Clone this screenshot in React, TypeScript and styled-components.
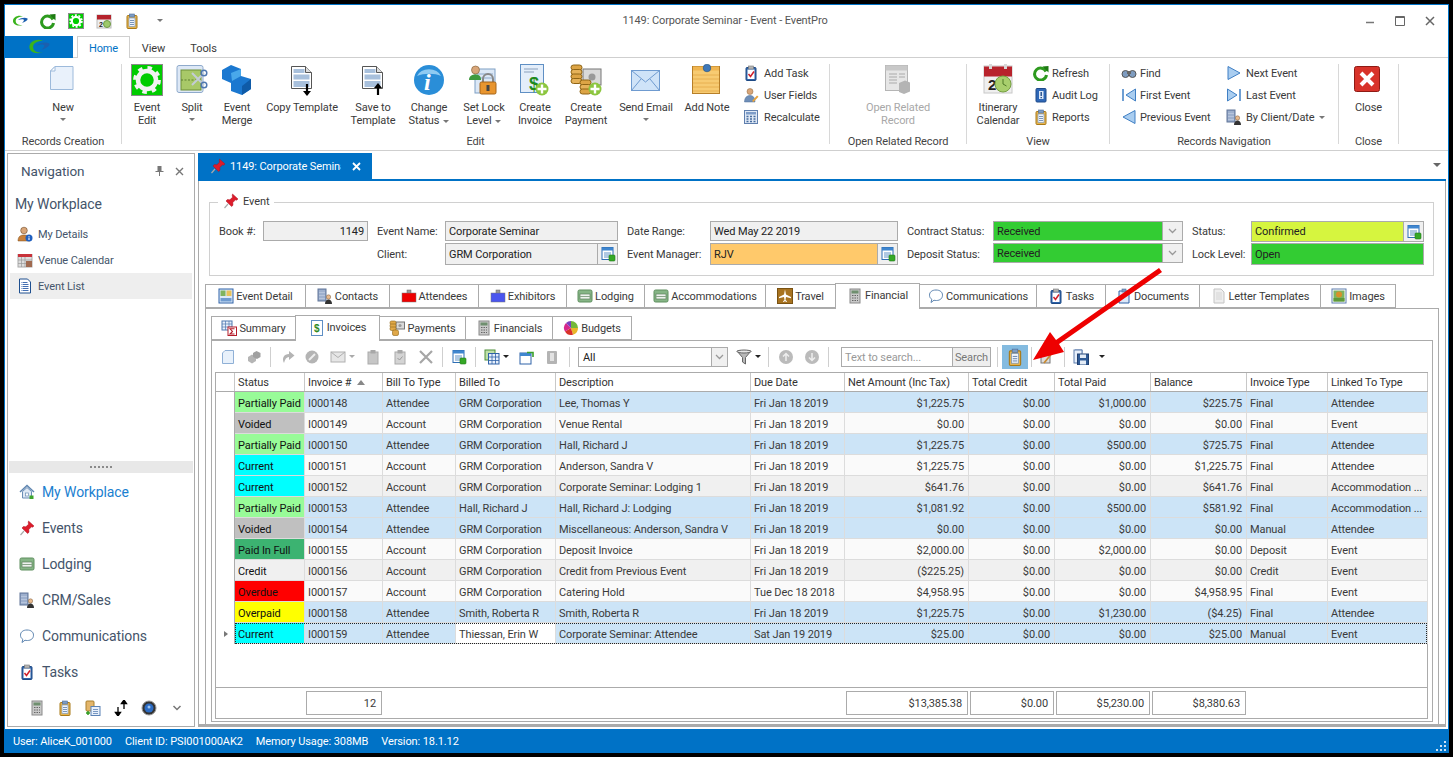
import React from 'react';
import styled, { createGlobalStyle } from 'styled-components';

const BLUE = '#0072c6';
const LINE = '#ababab';
const TEXT = '#3a3a3a';
const COLS = '19px 70px 78px 73px 100px 195px 94px 124px 86px 96px 96px 81px 100px';

const GlobalStyle = createGlobalStyle`
  html, body { margin: 0; padding: 0; background: #000; overflow: hidden; }
  body { font-family: Roboto, "Noto Sans", sans-serif; font-size: 11px; letter-spacing: -0.1px; color: ${TEXT}; }
  * { box-sizing: border-box; }
`;

const Icon: React.FC<{ name: string; size?: number }> = ({ name, size = 16 }) => {
  const big = name.startsWith('b_');
  return (
    <IconSvg viewBox={big ? '0 0 32 32' : '0 0 16 16'} $size={size}>
      {shapes[name]}
    </IconSvg>
  );
};

const IconSvg = styled.svg<{ $size: number }>`
  width: ${p => p.$size}px;
  height: ${p => p.$size}px;
  flex: none;
  display: block;
`;

const calcBody = (
  <>
    <rect x="3" y="1" width="10" height="14" fill="#c9c9c9" stroke="#8a8a8a" />
    <rect x="4.5" y="2.5" width="7" height="3" fill="#6f8f6f" />
    <path d="M5 7.5h1.5M7.5 7.5H9M10 7.5h1M5 10h1.5M7.5 10H9M10 10h1M5 12.5h1.5M7.5 12.5H9M10 12.5h1" stroke="#666" />
  </>
);
const clipboard = (
  <>
    <rect x="3" y="2.5" width="10" height="13" rx="1" fill="#e6b450" stroke="#a97a18" />
    <rect x="5" y="5" width="6" height="8.5" fill="#eef3fb" stroke="#6f8fb8" strokeWidth=".6" />
    <rect x="5.5" y="1" width="5" height="3" fill="#7d9cc4" stroke="#4f6f9b" strokeWidth=".6" />
    <path d="M6 7.5h4M6 9.5h4M6 11.5h4" stroke="#5b7ca8" strokeWidth=".8" />
  </>
);
const taskBoard = (
  <>
    <rect x="3" y="2.5" width="10" height="13" rx="1" fill="#2e62a8" stroke="#1e4a85" />
    <rect x="4.5" y="4.5" width="7" height="9.5" fill="#fff" />
    <rect x="5.5" y="1" width="5" height="3" fill="#b5b5b5" stroke="#777" strokeWidth=".6" />
    <path d="M5.5 9l2 2.5 3.5-5" stroke="#d0202a" strokeWidth="1.5" fill="none" />
  </>
);
const bed = (
  <>
    <rect x="1" y="2" width="14" height="12" rx="1.5" fill="#86b586" stroke="#5f8f5f" />
    <rect x="3" y="6" width="10" height="5" fill="#eef3ee" stroke="#5f7f5f" strokeWidth=".7" />
    <path d="M3 8.5h10" stroke="#8aa58a" />
  </>
);
const building = (
  <>
    <rect x="1" y="1" width="8" height="12" fill="#8ea3c4" stroke="#62779a" />
    <path d="M3 2v10M5 2v10M7 2v10M2 4.5h6M2 7.5h6M2 10.5h6" stroke="#c6d2e6" strokeWidth=".6" />
    <circle cx="11.5" cy="9" r="2.2" fill="#e8b98c" stroke="#7a5a3a" strokeWidth=".5" />
    <path d="M8 16c0-3 1.5-4.500 3.500-4.500S15 13 15 16z" fill="#333" />
  </>
);
const bubble = (
  <path d="M8 2c4 0 6.500 2 6.500 5.200S12 12.500 8.500 12.500c-1 0-1.800 0-2.500-.3L3 14.500l.8-3.200C2.300 10.300 1.500 9 1.500 7.200 1.500 4 4 2 8 2z" fill="#fff" stroke="#5e85b0" />
);
const pin = (
  <>
    <path d="M5 11L1.500 15" stroke="#aaa" strokeWidth="1.2" />
    <path d="M9.500 1l5.500 5-1.500 1.200-1-.4-2.700 2.800.2 2.600-1.400 1.300L3 8l1.300-1.400 2.600.2 2.800-2.700-.5-1.200z" fill="#dd1c2b" stroke="#a81020" strokeWidth=".5" />
  </>
);
const appCard = (
  <>
    <rect x="2" y="1.5" width="11" height="12" fill="#fff" stroke="#2f6fb5" />
    <rect x="2" y="1.500" width="11" height="3" fill="#3f86cf" />
    <path d="M4 7h7M4 9h7M4 11h5" stroke="#4f86c0" strokeWidth=".9" />
    <rect x="9" y="9" width="6" height="6" rx="1" fill="#35a826" stroke="#207a18" strokeWidth=".6" />
  </>
);
const badge = (c: string) => (
  <>
    <rect x="6" y="2" width="4" height="4" fill="#999" stroke="#666" strokeWidth=".5" />
    <rect x="1" y="5" width="14" height="9" fill={c} stroke="#777" strokeWidth=".5" />
  </>
);
const templateDoc = (up: boolean) => (
  <>
    <path d="M5.500 2.500h14l6 6v16h-20z" fill="#fff" stroke="#555" />
    <path d="M19.500 2.500v6h6" fill="#ddd" stroke="#555" />
    <rect x="7.500" y="5" width="11" height="4" fill="#a8c0dc" />
    <rect x="7.500" y="10.500" width="16" height="5" fill="#a8c0dc" />
    <rect x="7.500" y="17" width="16" height="6" fill="#a8c0dc" />
    <path d={up ? 'M21 31V21' : 'M21 20v10'} stroke="#000" strokeWidth="2.200" />
    <path d={up ? 'M17 24l4-5 4 5z' : 'M17 27l4 5 4-5z'} fill="#000" />
  </>
);
const triangle = (d: string, bar?: string) => (
  <>
    <path d={d} fill="#a9cdf0" stroke="#3f7fc4" />
    {bar && <path d={bar} stroke="#3f7fc4" strokeWidth="1.500" />}
  </>
);
const grayClip = (
  <>
    <rect x="3" y="3" width="10" height="12" fill="#c6c6c6" stroke="#ababab" />
    <rect x="5.500" y="1" width="5" height="3.500" fill="#a8a8a8" />
  </>
);

const shapes: Record<string, React.ReactNode> = {
  logo: (
    <>
      <path d="M11 3.500C6.500 1.500 1 4 1 8c0 3.500 4.500 5.500 9.500 4-3.500.5-6.800-1-6.800-4C3.700 5.200 7 3.500 11 3.500z" fill="#3ab31c" />
      <path d="M6 7c2.500-2 7-3 9.500-1.500.8 1-1.500 3-5.500 4.500 1.500-1.500 2.500-3 1.500-3.500-1.500-.6-3.500 0-5.500.5z" fill="#1b5fae" />
    </>
  ),
  refresh: (
    <>
      <path d="M13 6.500A6 6 0 1 0 13.500 10" fill="none" stroke="#2d9a1e" strokeWidth="3" />
      <path d="M9.500 1.500L15.500 1v6.500z" fill="#1d7a12" />
    </>
  ),
  gearSmall: (
    <>
      <rect x="0.500" y="0.500" width="15" height="15" fill="#00cc00" stroke="#8a8a8a" />
      <circle cx="8" cy="8" r="4.200" fill="none" stroke="#fff" strokeWidth="2.200" />
      <circle cx="8" cy="8" r="5.900" fill="none" stroke="#fff" strokeWidth="1.600" strokeDasharray="2 1.700" />
    </>
  ),
  calendar: (
    <>
      <rect x="1" y="2" width="14" height="13" fill="#eee" stroke="#bbb" />
      <rect x="1" y="2" width="14" height="4.500" fill="#b5232c" />
      <text x="3" y="13.500" fontSize="7" fontWeight="700" fill="#222" fontFamily="Liberation Sans">2</text>
      <circle cx="11" cy="11" r="3.500" fill="#9cc96a" stroke="#6f9a45" />
    </>
  ),
  clipboard,
  task: taskBoard,
  userFields: (
    <>
      <circle cx="7" cy="4.500" r="3" fill="#d9a679" stroke="#8a6238" strokeWidth=".5" />
      <path d="M1.500 15c0-4.500 2.500-6.500 5.500-6.500s5 2 5 6.500z" fill="#6f8fb8" stroke="#4f6f98" strokeWidth=".5" />
      <path d="M9 14l5-5.500 1.500 1.200L10.500 15z" fill="#e8a33a" />
    </>
  ),
  recalc: (
    <>
      <rect x="1.500" y="1.500" width="13" height="13" fill="#dfe8f5" stroke="#5f7fae" />
      <rect x="3" y="3" width="10" height="2.500" fill="#7d9cc8" />
      <path d="M3.500 7.500h2M7 7.500h2M10.500 7.500h2M3.500 10h2M7 10h2M10.500 10h2M3.500 12.500h2M7 12.500h2M10.500 12.500h2" stroke="#456b9e" strokeWidth="1.300" />
    </>
  ),
  audit: (
    <>
      <rect x="3" y="1.500" width="10" height="13.500" rx="1" fill="#2f68b8" stroke="#1f4a8a" />
      <rect x="6" y="4" width="4.500" height="8" fill="#dbe8f8" />
      <path d="M8.200 5v4M8.200 10v1.200" stroke="#1f4a8a" strokeWidth="1.400" />
    </>
  ),
  find: (
    <>
      <circle cx="4.500" cy="9" r="3.500" fill="#7e9cc0" stroke="#555" />
      <circle cx="11.500" cy="9" r="3.500" fill="#7e9cc0" stroke="#555" />
      <rect x="6" y="6" width="4" height="3" fill="#666" />
    </>
  ),
  first: triangle('M14.500 2v12L5 8z', 'M2 2v12'),
  prev: triangle('M14 1.500v13L2 8z'),
  next: triangle('M2 1.500v13L14 8z'),
  last: triangle('M1.500 2v12L11 8z', 'M14 2v12'),
  building,
  bubble,
  pin,
  appCard,
  bed,
  userInfo: (
    <>
      <circle cx="7" cy="4.500" r="3.300" fill="#d9a679" stroke="#6f4a28" strokeWidth=".6" />
      <path d="M1 15c0-4.500 2.500-6 6-6s6 1.500 6 6z" fill="#c9803a" stroke="#7d5020" strokeWidth=".5" />
      <circle cx="12" cy="12" r="3.500" fill="#1f5fbf" />
      <path d="M12 10v.8M12 11.500v2.500" stroke="#fff" strokeWidth="1.100" />
    </>
  ),
  venue: (
    <>
      <rect x="1" y="2.500" width="14" height="12.500" fill="#ddd" stroke="#aaa" />
      <rect x="1" y="2" width="14" height="3" fill="#c8323a" />
      <path d="M4.500 5v10M8 5v10M1 8h14M1 11.500h14" stroke="#999" strokeWidth=".7" />
      <rect x="9" y="9" width="6" height="6" fill="#a06a50" />
    </>
  ),
  list: (
    <>
      <path d="M2.500 1h8l3 3v11h-11z" fill="#fff" stroke="#1e4f8f" />
      <path d="M4.500 4.500h6M4.500 6.500h7M4.500 8.500h7M4.500 10.500h7M4.500 12.500h7" stroke="#2f5fa8" strokeWidth=".9" strokeDasharray="1 .5 6" />
    </>
  ),
  home: (
    <>
      <path d="M1 8l7-6.500L15 8" fill="none" stroke="#5e85b0" strokeWidth="1.500" />
      <path d="M3.500 7.500V14h9V7.500L8 3.500z" fill="#dfe9f5" stroke="#6a8db5" />
      <rect x="6.500" y="9" width="3" height="3" fill="#fff" stroke="#6a8db5" strokeWidth=".7" />
      <rect x="10.500" y="11.500" width="4" height="3.500" fill="#3fa62e" />
    </>
  ),
  calcSmall: calcBody,
  copyAdd: (
    <>
      <rect x="1" y="1" width="8" height="10" rx="1" fill="#e3b56a" stroke="#a9802f" />
      <path d="M1 13h4M3 11v4" stroke="#2f9a1f" strokeWidth="1.500" />
      <rect x="6" y="6.500" width="9" height="9" fill="#e8f0fb" stroke="#5b82b5" />
      <path d="M8 9.500h5M8 11.500h5M8 13.500h5" stroke="#5b82b5" strokeWidth=".8" />
    </>
  ),
  sortArrows: (
    <>
      <path d="M5 7v8M2.500 12.500L5 16l2.500-3.500z" stroke="#000" strokeWidth="1.300" />
      <path d="M11 9V1M8.500 3.500L11 0l2.500 3.500z" stroke="#000" strokeWidth="1.300" />
    </>
  ),
  orb: (
    <>
      <circle cx="8" cy="8" r="7" fill="#333" stroke="#999" />
      <circle cx="8" cy="8" r="4.500" fill="#2c6cc4" />
      <circle cx="8" cy="7" r="1.500" fill="#9cc4f0" />
    </>
  ),
  eventDetail: (
    <>
      <rect x="1" y="1" width="14" height="14" fill="#dbe8f8" stroke="#2f62a8" />
      <rect x="2.500" y="2.500" width="5" height="5.500" fill="#7fb35e" />
      <rect x="8.500" y="2.500" width="5" height="5.500" fill="#e8c25a" />
      <rect x="2.500" y="10" width="11" height="3.500" fill="#6f9bd0" />
    </>
  ),
  badgeRed: badge('#ee0000'),
  badgeBlue: badge('#4a55ee'),
  plane: (
    <>
      <rect x="0.500" y="0.500" width="15" height="15" fill="#a87320" stroke="#7a5212" />
      <path d="M8 1.500l1 5 5 2.500v1.200l-5-1.200-.5 3 1.500 1.200V14L8 13.300 6 14v-.8l1.500-1.200-.5-3L2 10.200V9l5-2.500z" fill="#fff" />
    </>
  ),
  documents: (
    <>
      <path d="M3 3h10v12H3z" fill="#dce8f8" stroke="#2f62a8" />
      <rect x="6" y="1" width="4" height="3" fill="#7d9cc4" stroke="#4f6f9b" strokeWidth=".6" />
    </>
  ),
  letter: (
    <>
      <path d="M3 1h7l3 3v11H3z" fill="#eee" stroke="#c4c4c4" />
      <path d="M5 5h6M5 7h6M5 9h6M5 11h6" stroke="#d6d6d6" />
    </>
  ),
  image: (
    <>
      <rect x="1" y="1" width="14" height="14" fill="#fff" stroke="#5f7fae" />
      <rect x="2.500" y="2.500" width="11" height="11" fill="#7fb35e" />
      <circle cx="8" cy="6.500" r="3" fill="#d8902a" />
      <rect x="2.500" y="10" width="11" height="3.500" fill="#5e9a3a" />
    </>
  ),
  summary: (
    <>
      <rect x="1" y="1" width="10" height="9" fill="#e8f0fb" stroke="#4f78b0" />
      <path d="M1 4h10M4.500 1v9M8 1v9M1 7h10" stroke="#4f78b0" strokeWidth=".7" />
      <rect x="7" y="7" width="8.500" height="8.500" fill="#fff" stroke="#b51c2a" />
      <path d="M13.500 8.800h-4.500l2.500 2.700-2.500 2.500h4.500" fill="none" stroke="#b51c2a" strokeWidth="1.100" />
    </>
  ),
  invoice: (
    <>
      <rect x="2.500" y="0.500" width="11" height="15" fill="#fff" stroke="#5f8fc4" />
      <text x="5" y="12" fontSize="10" fontWeight="700" fill="#2f8a1f" fontFamily="Liberation Sans">$</text>
    </>
  ),
  payment: (
    <>
      <rect x="7" y="2" width="8.500" height="7" fill="#d9d9d9" stroke="#777" />
      <circle cx="11" cy="5.500" r="1.600" fill="#999" />
      <rect x="1" y="1" width="6" height="3.500" rx="1.500" fill="#e0a848" stroke="#8f6414" strokeWidth=".6" />
      <rect x="1" y="4" width="6" height="3.500" rx="1.500" fill="#e0a848" stroke="#8f6414" strokeWidth=".6" />
      <rect x="1" y="7" width="6" height="3.500" rx="1.500" fill="#e0a848" stroke="#8f6414" strokeWidth=".6" />
      <rect x="3.500" y="10" width="6" height="5.500" rx="1.500" fill="#e0a848" stroke="#8f6414" strokeWidth=".6" />
    </>
  ),
  pie: (
    <>
      <path d="M8 8V1a7 7 0 0 1 7 7z" fill="#74b83a" />
      <path d="M8 8h7a7 7 0 0 1-5 6.700z" fill="#e8b62a" />
      <path d="M8 8l2 6.700A7 7 0 0 1 2 11.500z" fill="#d8322a" />
      <path d="M8 8L2 11.500A7 7 0 0 1 3 3z" fill="#d6288c" />
      <path d="M8 8L3 3a7 7 0 0 1 5-2z" fill="#7a3fc0" />
    </>
  ),
  pageLight: <path d="M5 1.500h8.500v13h-11V4z" fill="#e8f1fb" stroke="#8fb0d6" />,
  grayCopy: (
    <>
      <path d="M2 8l4-2.500 4 2.500v4l-4 2.500-4-2.500z" fill="#b5b5b5" />
      <path d="M7 4l3.500-2 4 2v4l-3.500 2-4-2z" fill="#a0a0a0" />
    </>
  ),
  grayRedo: <path d="M4 14c-2.500-5 0-9 5-9V2l5.500 4.500L9 11V8C6.500 8 5 10 4 14z" fill="#b4b4b4" />,
  grayCancel: (
    <>
      <circle cx="8" cy="8" r="6.500" fill="#b4b4b4" />
      <path d="M5 11l6-6" stroke="#eee" strokeWidth="2" />
    </>
  ),
  grayMail: (
    <>
      <rect x="1" y="3" width="14" height="10" fill="#e6e6e6" stroke="#b0b0b0" />
      <path d="M1 3l7 5.500L15 3" fill="none" stroke="#b0b0b0" />
    </>
  ),
  grayClip,
  grayClipCheck: (
    <>
      <rect x="3" y="3" width="10" height="12" fill="#d4d4d4" stroke="#aaa" />
      <rect x="5.500" y="1" width="5" height="3.500" fill="#a8a8a8" />
      <path d="M5.500 9l2 2 3-3.500" fill="none" stroke="#999" />
    </>
  ),
  grayX: <path d="M2 2l12 12M14 2L2 14" stroke="#a6a6a6" strokeWidth="2.200" />,
  tableGreen: (
    <>
      <rect x="1" y="1" width="10" height="10" fill="#bfe0a8" stroke="#4f8f3a" />
      <rect x="4.500" y="4.500" width="10.500" height="10.500" fill="#e8f0fb" stroke="#2f62a8" />
      <path d="M4.500 8h10.500M4.500 11.500h10.500M8 4.500V15M11.500 4.500V15" stroke="#2f62a8" strokeWidth=".8" />
    </>
  ),
  windowArrow: (
    <>
      <rect x="1" y="4" width="11" height="11" fill="#fff" stroke="#2f62a8" />
      <rect x="1" y="4" width="11" height="3" fill="#3f86cf" />
      <path d="M8 3.500h6V8" fill="none" stroke="#3aa02a" strokeWidth="1.600" />
    </>
  ),
  grayAudit: (
    <>
      <rect x="3" y="2" width="10" height="13" rx="1" fill="#b4b4b4" />
      <rect x="6" y="4" width="4" height="8" fill="#e2e2e2" />
    </>
  ),
  filter: (
    <>
      <path d="M1 2h14L9.500 8.500V15l-3-2V8.500z" fill="#b8b8b8" stroke="#666" />
      <ellipse cx="8" cy="2.500" rx="7" ry="1.500" fill="#e8e8e8" stroke="#666" />
    </>
  ),
  upCircle: (
    <>
      <circle cx="8" cy="8" r="7" fill="#bbb" />
      <path d="M8 12V5M5 7.500L8 4.500l3 3" fill="none" stroke="#eee" strokeWidth="1.500" />
    </>
  ),
  downCircle: (
    <>
      <circle cx="8" cy="8" r="7" fill="#bbb" />
      <path d="M8 4v7M5 8.500l3 3 3-3" fill="none" stroke="#eee" strokeWidth="1.500" />
    </>
  ),
  chartPen: (
    <>
      <rect x="2" y="5" width="9" height="9" fill="#ddd" stroke="#777" />
      <path d="M5 14L14 3" stroke="#c88a30" strokeWidth="1.800" />
    </>
  ),
  save: (
    <>
      <path d="M2 1h7v3H2z" fill="#dce8f8" stroke="#5f7fae" />
      <rect x="1" y="1" width="8" height="13" fill="#e8f0fb" stroke="#5f7fae" />
      <rect x="4.500" y="5" width="11" height="11" fill="#2f5b96" stroke="#1f3f70" />
      <rect x="7" y="5.500" width="6" height="3.500" fill="#e4ecf6" />
      <rect x="7" y="11.500" width="6" height="4" fill="#e4ecf6" />
    </>
  ),
  b_new: (
    <>
      <path d="M8 2.500h18v23H3.500V7z" fill="#e9f1fb" stroke="#9dbadb" />
      <path d="M8 2.500V7H3.500z" fill="#fff" stroke="#9dbadb" />
    </>
  ),
  b_gear: (
    <>
      <rect x="0.500" y="0.500" width="31" height="31" fill="#00cc00" stroke="#8a8a8a" />
      <circle cx="16" cy="16" r="9" fill="none" stroke="#f2f2f2" strokeWidth="4.500" />
      <circle cx="16" cy="16" r="12.200" fill="none" stroke="#f2f2f2" strokeWidth="3.400" strokeDasharray="4.500 5.100" />
    </>
  ),
  b_split: (
    <>
      <rect x="1" y="1.500" width="26" height="27" rx="2" fill="#dde8f6" stroke="#8faacb" />
      <rect x="5" y="6" width="20" height="20" fill="#a8c868" stroke="#6e8f38" />
      <path d="M5 16h20" stroke="#5e7f30" strokeDasharray="2 1.500" />
      <path d="M16 9l12 12M16 21L28 9" stroke="#c4ccd6" strokeWidth="2" />
      <circle cx="28" cy="9" r="2.800" fill="none" stroke="#4f78b0" strokeWidth="1.500" />
      <circle cx="28" cy="21" r="2.800" fill="none" stroke="#4f78b0" strokeWidth="1.500" />
    </>
  ),
  b_merge: (
    <>
      <path d="M1 6l9-5 10 4v7l10 3v10l-9 6-11-4v-8L1 15z" fill="#1b78d0" />
      <path d="M1 6l9 3 10-4v7l-9 5-1-8" fill="#49a8ea" />
      <path d="M21 31v-9l9-7v10z" fill="#0f5ba8" />
    </>
  ),
  b_copyTpl: templateDoc(false),
  b_saveTpl: templateDoc(true),
  b_info: (
    <>
      <circle cx="16" cy="16" r="15" fill="#2a8ed8" />
      <path d="M4 12a13 11 0 0 1 24 0c-6-3-17-3-24 0z" fill="#8fcbf2" />
      <text x="11" y="26" fontSize="24" fontWeight="700" fontStyle="italic" fill="#fff" fontFamily="Liberation Serif">i</text>
    </>
  ),
  b_lock: (
    <>
      <rect x="7" y="5" width="20" height="24" fill="#dce8f6" stroke="#7f9fc4" />
      <path d="M9 10h16M9 14h16" stroke="#8faacb" />
      <circle cx="7.500" cy="6" r="4" fill="#d9a679" stroke="#7d5a30" strokeWidth=".6" />
      <path d="M1 16c0-4 3-5.500 6.500-5.500S13 12 13 16z" fill="#3f9a3f" />
      <path d="M15 19v-4a5 5 0 0 1 10 0v4" fill="none" stroke="#888" strokeWidth="2" />
      <rect x="12" y="18" width="16" height="12" rx="1.500" fill="#e8952f" stroke="#a5651a" />
      <rect x="18.500" y="21" width="3" height="6" fill="#444" />
    </>
  ),
  b_invoice: (
    <>
      <rect x="1.500" y="0.500" width="23" height="28" fill="#e4eefa" stroke="#5f8fc4" />
      <path d="M5 5h14M5 8h10" stroke="#8aa0bc" />
      <text x="10" y="26" fontSize="18" fontWeight="700" fill="#1f8a1f" fontFamily="Liberation Sans">$</text>
      <circle cx="23" cy="25" r="6.500" fill="#8cc63f" />
      <path d="M23 20.500v9M18.500 25h9" stroke="#fff" strokeWidth="2.400" />
    </>
  ),
  b_payment: (
    <>
      <rect x="13" y="5" width="18" height="16" fill="#d9d9d9" stroke="#777" />
      <circle cx="22" cy="13" r="3.500" fill="#999" />
      <rect x="1" y="1" width="11" height="5" rx="2.500" fill="#dca445" stroke="#8f6414" />
      <rect x="1" y="5.500" width="11" height="5" rx="2.500" fill="#e5b25a" stroke="#8f6414" />
      <rect x="1" y="10" width="11" height="5" rx="2.500" fill="#dca445" stroke="#8f6414" />
      <rect x="1" y="14.500" width="11" height="5" rx="2.500" fill="#e5b25a" stroke="#8f6414" />
      <rect x="10" y="16" width="11" height="5" rx="2.500" fill="#dca445" stroke="#8f6414" />
      <rect x="10" y="20.500" width="11" height="5" rx="2.500" fill="#e5b25a" stroke="#8f6414" />
      <rect x="10" y="25" width="11" height="5" rx="2.500" fill="#dca445" stroke="#8f6414" />
      <circle cx="25" cy="25" r="6.500" fill="#8cc63f" />
      <path d="M25 20.500v9M20.500 25h9" stroke="#fff" strokeWidth="2.400" />
    </>
  ),
  b_mail: (
    <>
      <rect x="1.500" y="6.500" width="28" height="20" fill="#cfe3f8" stroke="#6f9bd0" />
      <path d="M1.500 6.500L15.500 18l14-11.500M1.500 26.500L11 15M29.500 26.500L20 15" fill="none" stroke="#6f9bd0" />
    </>
  ),
  b_note: (
    <>
      <rect x="1.500" y="2.500" width="27" height="27" fill="#f7cb72" stroke="#b77f28" />
      <path d="M2 11h26M2 15h26M2 19h26M2 23h26M2 27h26" stroke="#e8b050" />
      <rect x="2" y="2.500" width="26" height="4" fill="#f0b550" />
      <circle cx="16" cy="4" r="3.800" fill="#3f78b8" stroke="#24507f" strokeWidth=".6" />
    </>
  ),
  b_related: (
    <>
      <rect x="3.500" y="1.500" width="22" height="25" fill="#e6e6e6" stroke="#b5b5b5" />
      <rect x="3.500" y="1.500" width="22" height="5" fill="#c8c8c8" />
      <path d="M7 10h8M17 10h6M7 13h8M17 13h6M7 16h8M7 19h8" stroke="#aaa" />
      <path d="M17 19l6-2.500 5 2v9l-6 2.500-5-2z" fill="#b4b4b4" />
    </>
  ),
  b_itin: (
    <>
      <rect x="2" y="2" width="28" height="27" fill="#efefef" stroke="#c8c8c8" />
      <rect x="2" y="2.500" width="28" height="10" fill="#b8232c" />
      <rect x="7" y="0" width="3" height="5" fill="#d8d8d8" />
      <rect x="22" y="0" width="3" height="5" fill="#d8d8d8" />
      <text x="6" y="26" fontSize="15" fontWeight="700" fill="#222" fontFamily="Liberation Sans">2</text>
      <circle cx="21" cy="20" r="8" fill="#a8cf6d" stroke="#76a040" />
      <path d="M21 15v5l3.500 2" fill="none" stroke="#4f7a28" />
    </>
  ),
  b_close: (
    <>
      <rect x="1.500" y="2.500" width="25" height="25" rx="2" fill="#d8332a" stroke="#8f1a14" />
      <path d="M8 9l12 12M20 9L8 21" stroke="#fff" strokeWidth="4" />
    </>
  )
};

const Frame = styled.div`
  position: relative;
  width: 1453px;
  height: 757px;
  border: 4px solid #000;
  background: #fff;
  display: flex;
  flex-direction: column;
  overflow: hidden;
`;

const Inner = styled.div`
  flex: 1;
  display: flex;
  flex-direction: column;
  border: solid ${BLUE};
  border-width: 1px 1px 0 1px;
  min-height: 0;
`;

const TitleBar = styled.div`
  position: relative;
  height: 31px;
  flex: none;
  display: flex;
  align-items: center;
`;

const QuickAccess = styled.div`
  display: flex;
  align-items: center;
  padding-left: 6px;
  gap: 11px;
`;

const QuickSlot = styled.span`
  width: 17px;
  display: flex;
  justify-content: center;
`;

const Caret = styled.span<{ $color?: string; $s?: number }>`
  display: inline-block;
  width: 0;
  height: 0;
  flex: none;
  border-left: ${p => p.$s || 3}px solid transparent;
  border-right: ${p => p.$s || 3}px solid transparent;
  border-top: ${p => p.$s || 3}px solid ${p => p.$color || '#777'};
`;

const WindowTitle = styled.div`
  position: absolute;
  left: 0;
  right: 0;
  top: 0;
  bottom: 0;
  display: flex;
  align-items: center;
  justify-content: center;
  padding-right: 3px;
  color: #555;
  pointer-events: none;
`;

const WindowButtons = styled.div`
  margin-left: auto;
  display: flex;
  align-items: center;
  padding-right: 13px;
  gap: 20px;
`;

const RibbonTabs = styled.div`
  height: 22px;
  flex: none;
  display: flex;
  border-bottom: 1px solid #cfcfcf;
`;

const AppButton = styled.div`
  width: 68px;
  background: ${BLUE};
  display: flex;
  align-items: center;
  justify-content: center;
  margin-bottom: -1px;
`;

const RibbonTab = styled.div<{ $active?: boolean; $w: number }>`
  width: ${p => p.$w}px;
  margin-left: ${p => (p.$active ? 4 : 0)}px;
  padding-top: 2px;
  display: flex;
  align-items: center;
  justify-content: center;
  color: ${p => (p.$active ? BLUE : TEXT)};
  background: #fff;
  border: ${p => (p.$active ? '1px solid #cfcfcf' : '1px solid transparent')};
  border-bottom: 0;
  height: ${p => (p.$active ? '22px' : '21px')};
`;

const Ribbon = styled.div`
  height: 93px;
  flex: none;
  display: flex;
  padding-top: 6px;
  border-bottom: 1px solid #cfcfcf;
`;

const Group = styled.div<{ $w: number }>`
  width: ${p => p.$w}px;
  height: 80px;
  flex: none;
  border-right: 1px solid #d8d8d8;
  display: flex;
  flex-direction: column;
`;

const GroupBody = styled.div<{ $pad?: number; $center?: boolean }>`
  flex: 1;
  display: flex;
  padding-left: ${p => p.$pad || 0}px;
  justify-content: ${p => (p.$center ? 'center' : 'flex-start')};
`;

const GroupLabel = styled.div`
  height: 14px;
  line-height: 14px;
  margin-top: 1px;
  margin-bottom: -5px;
  text-align: center;
  color: #444;
`;

const LargeButton = styled.div<{ $w: number; $off?: boolean }>`
  width: ${p => p.$w}px;
  flex: none;
  display: flex;
  flex-direction: column;
  align-items: center;
  color: ${p => (p.$off ? '#a8a8a8' : TEXT)};
`;

const LargeIcon = styled.div`
  height: 32px;
  margin-bottom: 5px;
  display: flex;
  align-items: center;
`;

const LargeText = styled.div`
  line-height: 13px;
  text-align: center;
  white-space: nowrap;
`;

const LargeCaret = styled.div`
  line-height: 0;
  padding-top: 4px;
`;

const InlineCaret = styled(Caret)`
  margin-left: 4px;
  vertical-align: middle;
`;

const SmallColumn = styled.div<{ $ml?: number; $w?: number }>`
  margin-left: ${p => p.$ml || 0}px;
  margin-top: -2px;
  width: ${p => (p.$w ? `${p.$w}px` : 'auto')};
  flex: none;
`;

const SmallItem = styled.div<{ $gap: number }>`
  height: 22px;
  display: flex;
  align-items: center;
  gap: ${p => p.$gap}px;
  white-space: nowrap;
`;

const Workspace = styled.div`
  flex: 1;
  display: flex;
  min-height: 0;
  padding: 2px 0 2px 2px;
`;

const NavPanel = styled.aside`
  width: 188px;
  flex: none;
  border: 1px solid ${LINE};
  display: flex;
  flex-direction: column;
`;

const NavHeader = styled.div`
  height: 34px;
  flex: none;
  display: flex;
  align-items: center;
  padding: 0 10px 0 13px;
  font-size: 13.5px;
  color: #44546a;
`;

const NavHeaderTools = styled.div`
  margin-left: auto;
  display: flex;
  align-items: center;
  gap: 11px;
`;

const NavTitle = styled.div`
  font-size: 14px;
  color: #44546a;
  padding-left: 7px;
  height: 33px;
  line-height: 32px;
`;

const NavLink = styled.div<{ $selected?: boolean }>`
  height: 26px;
  margin: 0 2px;
  padding-left: 7px;
  display: flex;
  align-items: center;
  gap: 5px;
  color: #44546a;
  background: ${p => (p.$selected ? '#eeeeee' : 'transparent')};
`;

const NavSpacer = styled.div`
  flex: 1;
`;

const Splitter = styled.div`
  height: 12px;
  flex: none;
  margin: 0 1px;
  background: #e8e8e8;
  display: flex;
  align-items: center;
  justify-content: center;
  gap: 2px;
`;

const SplitDot = styled.span`
  width: 2px;
  height: 2px;
  background: #8a8a8a;
`;

const NavSection = styled.div<{ $active?: boolean }>`
  height: 36px;
  flex: none;
  padding: 2px 0 0 11px;
  display: flex;
  align-items: center;
  gap: 7px;
  font-size: 14px;
  color: ${p => (p.$active ? '#1b80d0' : '#44546a')};
`;

const NavFooter = styled.div`
  height: 37px;
  flex: none;
  display: flex;
  align-items: center;
  padding-left: 21px;
  gap: 12px;
`;

const Main = styled.main`
  flex: 1;
  min-width: 0;
  margin-left: 3px;
  display: flex;
  flex-direction: column;
`;

const DocStrip = styled.div`
  height: 28px;
  flex: none;
  display: flex;
  justify-content: space-between;
  border-bottom: 2px solid ${BLUE};
  margin-right: 2px;
`;

const DocTab = styled.div`
  width: 174px;
  background: ${BLUE};
  color: #fff;
  display: flex;
  align-items: center;
  padding-left: 12px;
  gap: 4px;
`;

const DocTabText = styled.span`
  width: 111px;
  overflow: hidden;
  white-space: nowrap;
`;

const DocClose = styled.svg`
  width: 9px;
  height: 9px;
  margin-left: 7px;
`;

const StripMenu = styled.div`
  display: flex;
  align-items: flex-start;
  padding: 10px 5px 0 0;
`;

const Content = styled.div`
  flex: 1;
  min-height: 0;
  margin-right: 2px;
  border: solid ${LINE};
  border-width: 0 1px 3px 1px;
  padding: 21px 6px 0 6px;
`;

const EventBox = styled.section`
  position: relative;
  margin: 0 5px 0 4px;
  height: 74px;
  border: 1px solid #d0d0d0;
  padding: 18px 0 0 9px;
`;

const EventLegend = styled.div`
  position: absolute;
  left: 8px;
  top: -10px;
  padding: 0 5px;
  background: #fff;
  display: flex;
  align-items: center;
  gap: 4px;
  height: 16px;
`;

const FieldGrid = styled.div`
  display: grid;
  grid-template-columns: 44px 105px 9px 68px 173px 9px 83px 188px 9px 86px 190px 9px 59px 173px;
  grid-template-rows: 20px 22px;
  row-gap: 2px;
`;

const FieldLabel = styled.label<{ $col: number; $row: number }>`
  grid-column: ${p => p.$col};
  grid-row: ${p => p.$row};
  display: flex;
  align-items: center;
  white-space: nowrap;
`;

const FieldBox = styled.div<{ $col: number; $row: number; $bg?: string; $h?: number }>`
  grid-column: ${p => p.$col};
  grid-row: ${p => p.$row};
  height: ${p => (p.$h ? `${p.$h}px` : '100%')};
  display: flex;
  align-items: stretch;
  border: 1px solid ${LINE};
  background: ${p => p.$bg || '#f0f0f0'};
  color: #222;
`;

const FieldText = styled.div<{ $right?: boolean }>`
  flex: 1;
  display: flex;
  align-items: center;
  padding: 0 3px;
  justify-content: ${p => (p.$right ? 'flex-end' : 'flex-start')};
`;

const FieldButton = styled.div`
  width: 20px;
  flex: none;
  background: #f0f0f0;
  border-left: 1px solid ${LINE};
  display: flex;
  align-items: center;
  justify-content: center;
`;

const ChevronSvg = styled.svg`
  width: 9px;
  height: 6px;
`;

const TabRow = styled.div<{ $h: number; $mt: number }>`
  height: ${p => p.$h}px;
  margin-top: ${p => p.$mt}px;
  display: flex;
  align-items: flex-end;
  flex: none;
`;

const Tab = styled.div<{ $w: number; $active?: boolean; $h: number }>`
  width: ${p => p.$w}px;
  height: ${p => p.$h + (p.$active ? 2 : 0)}px;
  margin-bottom: ${p => (p.$active ? -1 : 0)}px;
  padding-bottom: ${p => (p.$active ? 2 : 0)}px;
  margin-right: -1px;
  position: relative;
  z-index: ${p => (p.$active ? 1 : 0)};
  flex: none;
  border: 1px solid ${LINE};
  border-bottom: ${p => (p.$active ? 0 : `1px solid ${LINE}`)};
  background: #fff;
  display: flex;
  align-items: center;
  justify-content: center;
  gap: 2px;
  white-space: nowrap;
`;

const OuterPanel = styled.div`
  height: 417px;
  border: 1px solid ${LINE};
  border-bottom: 0;
  padding: 7px 5px 0 5px;
`;

const InnerPanel = styled.div`
  height: 382px;
  border: 1px solid ${LINE};
  padding: 0 5px 2px 3px;
  display: flex;
  flex-direction: column;
`;

const Toolbar = styled.div`
  height: 31px;
  flex: none;
  display: flex;
  align-items: center;
  padding-left: 1px;
`;

const ToolButton = styled.div<{ $w: number; $ml?: number; $on?: boolean }>`
  width: ${p => p.$w}px;
  margin-left: ${p => p.$ml || 0}px;
  height: 24px;
  flex: none;
  display: flex;
  align-items: center;
  justify-content: center;
  gap: 3px;
  background: ${p => (p.$on ? '#84bbe0' : 'transparent')};
`;

const ToolSep = styled.div<{ $ml: number }>`
  width: 1px;
  height: 20px;
  flex: none;
  margin-left: ${p => p.$ml}px;
  background: #cfcfcf;
`;

const FilterCombo = styled.div`
  width: 150px;
  height: 20px;
  margin-left: 8px;
  flex: none;
  display: flex;
  border: 1px solid ${LINE};
  color: #222;
`;

const ComboText = styled.div`
  flex: 1;
  padding: 1px 0 0 4px;
  display: flex;
  align-items: center;
`;

const ComboButton = styled.div`
  width: 16px;
  background: #f0f0f0;
  border-left: 1px solid ${LINE};
  display: flex;
  align-items: center;
  justify-content: center;
`;

const SearchBox = styled.div`
  width: 150px;
  height: 20px;
  margin-left: 12px;
  flex: none;
  display: flex;
  border: 1px solid ${LINE};
`;

const SearchInput = styled.div`
  flex: 1;
  padding: 1px 0 0 3px;
  display: flex;
  align-items: center;
  color: #999;
`;

const SearchButton = styled.div`
  width: 38px;
  padding-top: 1px;
  background: #eeeeee;
  border-left: 1px solid ${LINE};
  display: flex;
  align-items: center;
  justify-content: center;
  color: #777;
`;

const GridBox = styled.div`
  flex: 1;
  min-height: 0;
  border: 1px solid ${LINE};
  margin-right: -1px;
  display: flex;
  flex-direction: column;
`;

const GridRow = styled.div<{ $bg?: string; $current?: boolean }>`
  display: grid;
  grid-template-columns: ${COLS};
  flex: none;
  height: 21px;
  background: ${p => p.$bg || '#fff'};
  position: relative;
  &::after {
    content: '';
    display: ${p => (p.$current ? 'block' : 'none')};
    position: absolute;
    left: 19px;
    right: 0;
    top: 0;
    bottom: 0;
    border: 1px dotted #222;
    pointer-events: none;
  }
`;

const HeaderRow = styled(GridRow)`
  height: 19px;
  border-bottom: 1px solid ${LINE};
`;

const HeadCell = styled.div`
  display: flex;
  align-items: center;
  gap: 4px;
  padding: 1px 0 0 3px;
  border-right: 1px solid #c8c8c8;
  color: #333;
  white-space: nowrap;
  overflow: hidden;
`;

const IndicatorCell = styled.div`
  background: #fff;
  border-right: 1px solid ${LINE};
  display: flex;
  align-items: center;
  justify-content: flex-end;
  padding-right: 6px;
`;

const Cell = styled.div<{ $right?: boolean; $bg?: string; $dark?: boolean }>`
  display: flex;
  align-items: center;
  justify-content: ${p => (p.$right ? 'flex-end' : 'flex-start')};
  padding: 2px ${p => (p.$right ? 4 : 3)}px 0;
  background: ${p => p.$bg || 'transparent'};
  border-right: 1px solid #dcdcdc;
  border-bottom: 1px solid #dcdcdc;
  color: ${p => (p.$dark ? '#111' : TEXT)};
  white-space: nowrap;
  overflow: hidden;
`;

const SideTriangle = styled.span`
  width: 0;
  height: 0;
  border-top: 3.500px solid transparent;
  border-bottom: 3.500px solid transparent;
  border-left: 4px solid #777;
`;

const SortTriangle = styled.span`
  width: 0;
  height: 0;
  margin-left: 2px;
  border-left: 4px solid transparent;
  border-right: 4px solid transparent;
  border-bottom: 5px solid #888;
`;

const GridFill = styled.div`
  flex: 1;
`;

const FooterRow = styled.div`
  height: 31px;
  flex: none;
  border-top: 1px solid ${LINE};
  display: grid;
  grid-template-columns: ${COLS};
  padding-top: 3px;
`;

const FooterCell = styled.div<{ $col: number }>`
  grid-column: ${p => p.$col};
  height: 24px;
  margin: 0 1px;
  border: 1px solid ${LINE};
  display: flex;
  align-items: center;
  justify-content: flex-end;
  padding-right: 5px;
`;

const StatusBar = styled.footer`
  position: relative;
  height: 24px;
  flex: none;
  background: ${BLUE};
  color: #fff;
  display: flex;
  align-items: center;
  padding-left: 8px;
  gap: 13px;
`;

const Grip = styled.svg`
  position: absolute;
  right: 2px;
  bottom: 2px;
  width: 10px;
  height: 10px;
`;

const ArrowOverlay = styled.svg`
  position: absolute;
  left: 1026px;
  top: 261px;
  width: 140px;
  height: 100px;
  pointer-events: none;
`;

type Large = { w: number; icon: string; lines: string[]; caret?: 'below' | 'inline'; off?: boolean };

const editButtons: Large[] = [
  { w: 44, icon: 'b_gear', lines: ['Event', 'Edit'] },
  { w: 46, icon: 'b_split', lines: ['Split'], caret: 'below' },
  { w: 44, icon: 'b_merge', lines: ['Event', 'Merge'] },
  { w: 86, icon: 'b_copyTpl', lines: ['Copy Template'] },
  { w: 56, icon: 'b_saveTpl', lines: ['Save to', 'Template'] },
  { w: 56, icon: 'b_info', lines: ['Change', 'Status'], caret: 'inline' },
  { w: 54, icon: 'b_lock', lines: ['Set Lock', 'Level'], caret: 'inline' },
  { w: 48, icon: 'b_invoice', lines: ['Create', 'Invoice'] },
  { w: 54, icon: 'b_payment', lines: ['Create', 'Payment'] },
  { w: 66, icon: 'b_mail', lines: ['Send Email'], caret: 'below' },
  { w: 56, icon: 'b_note', lines: ['Add Note'] }
];

const LargeBtn: React.FC<Large> = ({ w, icon, lines, caret, off }) => (
  <LargeButton $w={w} $off={off}>
    <LargeIcon>
      <Icon name={icon} size={32} />
    </LargeIcon>
    {lines.map((l, i) => (
      <LargeText key={l}>
        {l}
        {caret === 'inline' && i === lines.length - 1 && <InlineCaret />}
      </LargeText>
    ))}
    {caret === 'below' && (
      <LargeCaret>
        <Caret />
      </LargeCaret>
    )}
  </LargeButton>
);

const Small: React.FC<{ icon: string; label: string; caret?: boolean; gap?: number }> = ({ icon, label, caret, gap = 5 }) => (
  <SmallItem $gap={gap}>
    <Icon name={icon} />
    <span>
      {label}
      {caret && <InlineCaret />}
    </span>
  </SmallItem>
);

const Chevron = () => (
  <ChevronSvg viewBox="0 0 9 6">
    <path d="M1 1l3.500 3.500L8 1" fill="none" stroke="#999" strokeWidth="1.300" />
  </ChevronSvg>
);

const Picker = () => (
  <FieldButton>
    <Icon name="appCard" />
  </FieldButton>
);

const outerTabs = [
  { w: 101, icon: 'eventDetail', label: 'Event Detail' },
  { w: 85, icon: 'building', label: 'Contacts' },
  { w: 90, icon: 'badgeRed', label: 'Attendees' },
  { w: 89, icon: 'badgeBlue', label: 'Exhibitors' },
  { w: 79, icon: 'bed', label: 'Lodging' },
  { w: 122, icon: 'bed', label: 'Accommodations' },
  { w: 71, icon: 'plane', label: 'Travel' },
  { w: 85, icon: 'calcSmall', label: 'Financial', active: true },
  { w: 118, icon: 'bubble', label: 'Communications' },
  { w: 70, icon: 'task', label: 'Tasks' },
  { w: 95, icon: 'documents', label: 'Documents' },
  { w: 122, icon: 'letter', label: 'Letter Templates' },
  { w: 76, icon: 'image', label: 'Images' }
];

const innerTabs = [
  { w: 85, icon: 'summary', label: 'Summary' },
  { w: 85, icon: 'invoice', label: 'Invoices', active: true },
  { w: 87, icon: 'payment', label: 'Payments' },
  { w: 88, icon: 'calcSmall', label: 'Financials' },
  { w: 80, icon: 'pie', label: 'Budgets' }
];

const heads = ['Status', 'Invoice #', 'Bill To Type', 'Billed To', 'Description', 'Due Date', 'Net Amount (Inc Tax)', 'Total Credit', 'Total Paid', 'Balance', 'Invoice Type', 'Linked To Type'];

const statusColors: Record<string, string> = {
  'Partially Paid': '#98fb98',
  Voided: '#c0c0c0',
  Current: '#00ffff',
  'Paid In Full': '#3cb371',
  Credit: '#f0f0f0',
  Overdue: '#ff0000',
  Overpaid: '#ffff00'
};

const rows = [
  ['Partially Paid', 'I000148', 'Attendee', 'GRM Corporation', 'Lee, Thomas Y', 'Fri Jan 18 2019', '$1,225.75', '$0.00', '$1,000.00', '$225.75', 'Final', 'Attendee'],
  ['Voided', 'I000149', 'Account', 'GRM Corporation', 'Venue Rental', 'Fri Jan 18 2019', '$0.00', '$0.00', '$0.00', '$0.00', 'Final', 'Event'],
  ['Partially Paid', 'I000150', 'Attendee', 'GRM Corporation', 'Hall, Richard J', 'Fri Jan 18 2019', '$1,225.75', '$0.00', '$500.00', '$725.75', 'Final', 'Attendee'],
  ['Current', 'I000151', 'Account', 'GRM Corporation', 'Anderson, Sandra V', 'Fri Jan 18 2019', '$1,225.75', '$0.00', '$0.00', '$1,225.75', 'Final', 'Attendee'],
  ['Current', 'I000152', 'Account', 'GRM Corporation', 'Corporate Seminar: Lodging 1', 'Fri Jan 18 2019', '$641.76', '$0.00', '$0.00', '$641.76', 'Final', 'Accommodation ...'],
  ['Partially Paid', 'I000153', 'Attendee', 'Hall, Richard J', 'Hall, Richard J: Lodging', 'Fri Jan 18 2019', '$1,081.92', '$0.00', '$500.00', '$581.92', 'Final', 'Accommodation ...'],
  ['Voided', 'I000154', 'Attendee', 'GRM Corporation', 'Miscellaneous: Anderson, Sandra V', 'Fri Jan 18 2019', '$0.00', '$0.00', '$0.00', '$0.00', 'Manual', 'Attendee'],
  ['Paid In Full', 'I000155', 'Account', 'GRM Corporation', 'Deposit Invoice', 'Fri Jan 18 2019', '$2,000.00', '$0.00', '$2,000.00', '$0.00', 'Deposit', 'Event'],
  ['Credit', 'I000156', 'Account', 'GRM Corporation', 'Credit from Previous Event', 'Fri Jan 18 2019', '($225.25)', '$0.00', '$0.00', '$0.00', 'Credit', 'Event'],
  ['Overdue', 'I000157', 'Account', 'GRM Corporation', 'Catering Hold', 'Tue Dec 18 2018', '$4,958.95', '$0.00', '$0.00', '$4,958.95', 'Final', 'Event'],
  ['Overpaid', 'I000158', 'Attendee', 'Smith, Roberta R', 'Smith, Roberta R', 'Fri Jan 18 2019', '$1,225.75', '$0.00', '$1,230.00', '($4.25)', 'Final', 'Attendee'],
  ['Current', 'I000159', 'Attendee', 'Thiessan, Erin W', 'Corporate Seminar: Attendee', 'Sat Jan 19 2019', '$25.00', '$0.00', '$0.00', '$25.00', 'Manual', 'Event']
];

const rowColor = (type: string, i: number) => {
  if (type === 'Attendee') return '#cce4f7';
  return i % 2 === 1 ? '#fafafa' : '#f0f0f0';
};

export default function App() {
  return (
    <>
      <GlobalStyle />
      <Frame>
        <Inner>
          <TitleBar>
            <QuickAccess>
              <QuickSlot><Icon name="logo" /></QuickSlot>
              <QuickSlot><Icon name="refresh" /></QuickSlot>
              <QuickSlot><Icon name="gearSmall" /></QuickSlot>
              <QuickSlot><Icon name="calendar" /></QuickSlot>
              <QuickSlot><Icon name="clipboard" /></QuickSlot>
              <QuickSlot><Caret /></QuickSlot>
            </QuickAccess>
            <WindowTitle>1149: Corporate Seminar - Event - EventPro</WindowTitle>
            <WindowButtons>
              <svg width="10" height="10" viewBox="0 0 10 10"><path d="M1 6.500h8" stroke="#777" strokeWidth="1.500" /></svg>
              <svg width="10" height="10" viewBox="0 0 10 10"><path d="M.5.500h9v9h-9zM.5 1.500h9" fill="none" stroke="#666" /></svg>
              <svg width="10" height="10" viewBox="0 0 10 10"><path d="M1 1l8 8M9 1L1 9" stroke="#666" strokeWidth="1.500" /></svg>
            </WindowButtons>
          </TitleBar>

          <RibbonTabs>
            <AppButton><Icon name="logo" size={22} /></AppButton>
            <RibbonTab $w={53} $active>Home</RibbonTab>
            <RibbonTab $w={47}>View</RibbonTab>
            <RibbonTab $w={53}>Tools</RibbonTab>
          </RibbonTabs>

          <Ribbon>
            <Group $w={117}>
              <GroupBody $center><LargeBtn w={60} icon="b_new" lines={['New']} caret="below" /></GroupBody>
              <GroupLabel>Records Creation</GroupLabel>
            </Group>
            <Group $w={708}>
              <GroupBody $pad={3}>
                {editButtons.map(b => <LargeBtn key={b.icon} {...b} />)}
                <SmallColumn $ml={8}>
                  <Small icon="task" label="Add Task" />
                  <Small icon="userFields" label="User Fields" />
                  <Small icon="recalc" label="Recalculate" />
                </SmallColumn>
              </GroupBody>
              <GroupLabel>Edit</GroupLabel>
            </Group>
            <Group $w={137}>
              <GroupBody $center><LargeBtn w={90} icon="b_related" lines={['Open Related', 'Record']} off /></GroupBody>
              <GroupLabel>Open Related Record</GroupLabel>
            </Group>
            <Group $w={143}>
              <GroupBody $pad={1}>
                <LargeBtn w={60} icon="b_itin" lines={['Itinerary', 'Calendar']} />
                <SmallColumn $ml={5}>
                  <Small icon="refresh" label="Refresh" gap={3} />
                  <Small icon="audit" label="Audit Log" gap={3} />
                  <Small icon="clipboard" label="Reports" gap={3} />
                </SmallColumn>
              </GroupBody>
              <GroupLabel>View</GroupLabel>
            </Group>
            <Group $w={229}>
              <GroupBody $pad={11}>
                <SmallColumn $w={105}>
                  <Small icon="find" label="Find" gap={3} />
                  <Small icon="first" label="First Event" gap={3} />
                  <Small icon="prev" label="Previous Event" gap={3} />
                </SmallColumn>
                <SmallColumn>
                  <Small icon="next" label="Next Event" gap={4} />
                  <Small icon="last" label="Last Event" gap={4} />
                  <Small icon="building" label="By Client/Date" gap={4} caret />
                </SmallColumn>
              </GroupBody>
              <GroupLabel>Records Navigation</GroupLabel>
            </Group>
            <Group $w={60}>
              <GroupBody $center><LargeBtn w={50} icon="b_close" lines={['Close']} /></GroupBody>
              <GroupLabel>Close</GroupLabel>
            </Group>
          </Ribbon>

          <Workspace>
            <NavPanel>
              <NavHeader>
                Navigation
                <NavHeaderTools>
                  <svg width="9" height="10" viewBox="0 0 9 10"><path d="M2.500 0h4v5h2v1H5v4H4V6H.5V5h2z" fill="#777" /></svg>
                  <svg width="9" height="9" viewBox="0 0 9 9"><path d="M1 1l7 7M8 1L1 8" stroke="#777" strokeWidth="1.400" /></svg>
                </NavHeaderTools>
              </NavHeader>
              <NavTitle>My Workplace</NavTitle>
              <NavLink><Icon name="userInfo" />My Details</NavLink>
              <NavLink><Icon name="venue" />Venue Calendar</NavLink>
              <NavLink $selected><Icon name="list" />Event List</NavLink>
              <NavSpacer />
              <Splitter>
                {[0, 1, 2, 3, 4, 5].map(i => <SplitDot key={i} />)}
              </Splitter>
              <NavSection $active><Icon name="home" />My Workplace</NavSection>
              <NavSection><Icon name="pin" />Events</NavSection>
              <NavSection><Icon name="bed" />Lodging</NavSection>
              <NavSection><Icon name="building" />CRM/Sales</NavSection>
              <NavSection><Icon name="bubble" />Communications</NavSection>
              <NavSection><Icon name="task" />Tasks</NavSection>
              <NavFooter>
                <Icon name="calcSmall" />
                <Icon name="clipboard" />
                <Icon name="copyAdd" />
                <Icon name="sortArrows" />
                <Icon name="orb" />
                <svg width="16" height="16" viewBox="0 0 16 16"><path d="M4.500 6l3.500 3.500L11.500 6" fill="none" stroke="#777" strokeWidth="1.500" /></svg>
              </NavFooter>
            </NavPanel>

            <Main>
              <DocStrip>
                <DocTab>
                  <Icon name="pin" />
                  <DocTabText>1149: Corporate Seminar</DocTabText>
                  <DocClose viewBox="0 0 9 9"><path d="M1 1l7 7M8 1L1 8" stroke="#fff" strokeWidth="1.800" /></DocClose>
                </DocTab>
                <StripMenu><Caret $color="#666" $s={4} /></StripMenu>
              </DocStrip>

              <Content>
                <EventBox>
                  <EventLegend><Icon name="pin" />Event</EventLegend>
                  <FieldGrid>
                    <FieldLabel $col={1} $row={1}>Book #:</FieldLabel>
                    <FieldBox $col={2} $row={1}><FieldText $right>1149</FieldText></FieldBox>
                    <FieldLabel $col={4} $row={1}>Event Name:</FieldLabel>
                    <FieldBox $col={5} $row={1}><FieldText>Corporate Seminar</FieldText></FieldBox>
                    <FieldLabel $col={7} $row={1}>Date Range:</FieldLabel>
                    <FieldBox $col={8} $row={1}><FieldText>Wed May 22 2019</FieldText></FieldBox>
                    <FieldLabel $col={10} $row={1}>Contract Status:</FieldLabel>
                    <FieldBox $col={11} $row={1} $bg="#33cc33">
                      <FieldText>Received</FieldText>
                      <FieldButton><Chevron /></FieldButton>
                    </FieldBox>
                    <FieldLabel $col={13} $row={1}>Status:</FieldLabel>
                    <FieldBox $col={14} $row={1} $bg="#d6f53f" $h={21}>
                      <FieldText>Confirmed</FieldText>
                      <Picker />
                    </FieldBox>
                    <FieldLabel $col={4} $row={2}>Client:</FieldLabel>
                    <FieldBox $col={5} $row={2}>
                      <FieldText>GRM Corporation</FieldText>
                      <Picker />
                    </FieldBox>
                    <FieldLabel $col={7} $row={2}>Event Manager:</FieldLabel>
                    <FieldBox $col={8} $row={2} $bg="#ffc96b">
                      <FieldText>RJV</FieldText>
                      <Picker />
                    </FieldBox>
                    <FieldLabel $col={10} $row={2}>Deposit Status:</FieldLabel>
                    <FieldBox $col={11} $row={2} $bg="#33cc33" $h={20}>
                      <FieldText>Received</FieldText>
                      <FieldButton><Chevron /></FieldButton>
                    </FieldBox>
                    <FieldLabel $col={13} $row={2}>Lock Level:</FieldLabel>
                    <FieldBox $col={14} $row={2} $bg="#33cc33"><FieldText>Open</FieldText></FieldBox>
                  </FieldGrid>
                </EventBox>

                <TabRow $h={24} $mt={8}>
                  {outerTabs.map(t => (
                    <Tab key={t.label} $w={t.w} $h={24} $active={t.active}>
                      <Icon name={t.icon} />
                      {t.label}
                    </Tab>
                  ))}
                </TabRow>
                <OuterPanel>
                  <TabRow $h={24} $mt={0}>
                    {innerTabs.map(t => (
                      <Tab key={t.label} $w={t.w} $h={24} $active={t.active}>
                        <Icon name={t.icon} />
                        {t.label}
                      </Tab>
                    ))}
                  </TabRow>
                  <InnerPanel>
                    <Toolbar>
                      <ToolButton $w={24}><Icon name="pageLight" /></ToolButton>
                      <ToolButton $w={24} $ml={2}><Icon name="grayCopy" /></ToolButton>
                      <ToolSep $ml={4} />
                      <ToolButton $w={24} $ml={5}><Icon name="grayRedo" /></ToolButton>
                      <ToolButton $w={24}><Icon name="grayCancel" /></ToolButton>
                      <ToolButton $w={36}><Icon name="grayMail" /><Caret $color="#aaa" /></ToolButton>
                      <ToolButton $w={24} $ml={1}><Icon name="grayClip" /></ToolButton>
                      <ToolButton $w={24} $ml={3}><Icon name="grayClipCheck" /></ToolButton>
                      <ToolButton $w={24} $ml={2}><Icon name="grayX" /></ToolButton>
                      <ToolSep $ml={4} />
                      <ToolButton $w={24} $ml={4}><Icon name="appCard" /></ToolButton>
                      <ToolSep $ml={4} />
                      <ToolButton $w={34} $ml={3}><Icon name="tableGreen" /><Caret $color="#222" /></ToolButton>
                      <ToolButton $w={24} $ml={2}><Icon name="windowArrow" /></ToolButton>
                      <ToolButton $w={24} $ml={1}><Icon name="grayAudit" /></ToolButton>
                      <ToolSep $ml={5} />
                      <FilterCombo>
                        <ComboText>All</ComboText>
                        <ComboButton><Chevron /></ComboButton>
                      </FilterCombo>
                      <ToolButton $w={32} $ml={4}><Icon name="filter" /><Caret $color="#222" /></ToolButton>
                      <ToolSep $ml={4} />
                      <ToolButton $w={24} $ml={5}><Icon name="upCircle" /></ToolButton>
                      <ToolButton $w={24} $ml={2}><Icon name="downCircle" /></ToolButton>
                      <ToolSep $ml={4} />
                      <SearchBox>
                        <SearchInput>Text to search...</SearchInput>
                        <SearchButton>Search</SearchButton>
                      </SearchBox>
                      <ToolSep $ml={6} />
                      <ToolButton $w={26} $ml={4} $on><Icon name="clipboard" size={18} /></ToolButton>
                      <ToolSep $ml={3} />
                      <ToolButton $w={24} $ml={3}><Icon name="chartPen" /></ToolButton>
                      <ToolSep $ml={5} />
                      <ToolButton $w={24} $ml={4}><Icon name="save" /></ToolButton>
                      <ToolButton $w={14} $ml={2}><Caret $color="#222" /></ToolButton>
                    </Toolbar>
                    <GridBox>
                      <HeaderRow>
                        <HeadCell />
                        {heads.map(h => (
                          <HeadCell key={h}>
                            {h}
                            {h === 'Invoice #' && <SortTriangle />}
                          </HeadCell>
                        ))}
                      </HeaderRow>
                      {rows.map((r, i) => {
                        const last = i === rows.length - 1;
                        return (
                          <GridRow key={r[1]} $bg={rowColor(r[2], i)} $current={last}>
                            <IndicatorCell>{last && <SideTriangle />}</IndicatorCell>
                            {r.map((v, c) => (
                              <Cell
                                key={c}
                                $right={c >= 6 && c <= 9}
                                $bg={c === 0 ? statusColors[v] : last && c === 3 ? '#fff' : undefined}
                                $dark={c === 0}
                              >
                                {v}
                              </Cell>
                            ))}
                          </GridRow>
                        );
                      })}
                      <GridFill />
                      <FooterRow>
                        <FooterCell $col={3}>12</FooterCell>
                        <FooterCell $col={8}>$13,385.38</FooterCell>
                        <FooterCell $col={9}>$0.00</FooterCell>
                        <FooterCell $col={10}>$5,230.00</FooterCell>
                        <FooterCell $col={11}>$8,380.63</FooterCell>
                      </FooterRow>
                    </GridBox>
                  </InnerPanel>
                </OuterPanel>
              </Content>
            </Main>
          </Workspace>

          <StatusBar>
            <span>User: AliceK_001000</span>
            <span>Client ID: PSI001000AK2</span>
            <span>Memory Usage: 308MB</span>
            <span>Version: 18.1.12</span>
            <Grip viewBox="0 0 10 10">
              <path d="M8 0h2v2H8zM4 4h2v2H4zM8 4h2v2H8zM0 8h2v2H0zM4 8h2v2H4zM8 8h2v2H8z" fill="#cfe3f5" />
            </Grip>
          </StatusBar>
        </Inner>
        <ArrowOverlay viewBox="1030 265 140 100">
          <polygon points="1033,360 1050,332 1056,340 1159,268 1162,272 1059,344 1064,352" fill="#ee0000" />
        </ArrowOverlay>
      </Frame>
    </>
  );
}
